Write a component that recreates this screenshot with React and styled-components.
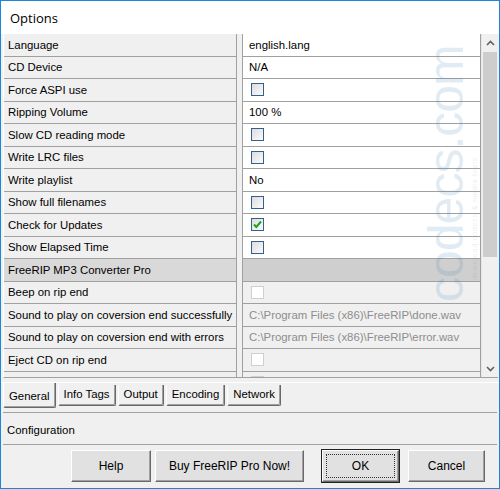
import React from "react";
import styled, { createGlobalStyle } from "styled-components";

const Global = createGlobalStyle`
  html, body { margin: 0; padding: 0; background: #fff; }
  body { font-family: "Liberation Sans", Arial, sans-serif; }
  * { box-sizing: border-box; }
`;

const Window = styled.div`
  width: 500px;
  height: 489px;
  border: 1px solid #1e86d6;
  background: #f0f0f0;
  display: flex;
  flex-direction: column;
  overflow: hidden;
  font-size: 11.4px;
  color: #000;
`;

const TitleBar = styled.div`
  height: 33px;
  flex-shrink: 0;
  background: #fff;
  padding-left: 9px;
  display: flex;
  align-items: center;
  font-size: 13px;
  font-family: "Open Sans", "Liberation Sans", sans-serif;
`;

const GridFrame = styled.div`
  margin: 0 1px 0 2px;
  height: 344px;
  flex-shrink: 0;
  display: flex;
  border-left: 1px solid #fff;
  border-bottom: 1px solid #a0a0a0;
`;

const Grid = styled.div`
  flex: 1;
  position: relative;
  overflow: hidden;
  background: #f0f0f0;
`;

const Row = styled.div`
  display: grid;
  grid-template-columns: 233px 6px 1fr;
  height: 22.5px;
`;

const NameCell = styled.div`
  background: ${(p) => (p.$category ? "#d9d9d9" : "#f0f0f0")};
  border-bottom: 1px solid #a0a0a0;
  border-right: 1px solid #a0a0a0;
  padding-left: 4px;
  display: flex;
  align-items: center;
  white-space: nowrap;
  overflow: hidden;
`;

const Splitter = styled.div`
  background: #f0f0f0;
  border-right: 1px solid #a0a0a0;
`;

const ValueCell = styled.div`
  background: ${(p) =>
    p.$category ? "#cfcfcf" : p.$disabled ? "#f0f0f0" : "#fff"};
  color: ${(p) => (p.$disabled ? "#8d8d8d" : "#000")};
  border-bottom: 1px solid #a0a0a0;
  border-right: 1px solid #a0a0a0;
  padding-left: 6px;
  display: flex;
  align-items: center;
  white-space: nowrap;
  overflow: hidden;
`;

const Check = styled.span`
  width: 13px;
  height: 13px;
  border: 1px solid ${(p) => (p.$disabled ? "#cfcfcf" : "#335f91")};
  background: ${(p) =>
    p.$disabled ? "#fff" : "linear-gradient(135deg, #dcdcdc, #fbfbfb)"};
  margin-left: 2px;
  display: flex;
  align-items: center;
  justify-content: center;
`;

const Watermark = styled.div`
  position: absolute;
  left: 417px;
  top: 0;
  width: 270px;
  height: 60px;
  transform-origin: 0 0;
  transform: translate(0, 268px) rotate(-90deg);
  pointer-events: none;
  display: flex;
  flex-direction: column;
  color: rgba(70, 130, 180, 0.16);
  font-family: "Liberation Sans", Arial, sans-serif;
  white-space: nowrap;
`;

const WmBig = styled.div`
  font-size: 50px;
  line-height: 50px;
  letter-spacing: -1px;
`;

const WmSmall = styled.div`
  font-size: 7.5px;
  line-height: 8px;
  padding-left: 22px;
  letter-spacing: 0.6px;
`;

const ScrollBar = styled.div`
  width: 17px;
  background: #f0f0f0;
  display: flex;
  flex-direction: column;
  border-left: 1px solid #e6e6e6;
`;

const Arrow = styled.div`
  height: 17px;
  display: flex;
  align-items: center;
  justify-content: center;
`;

const Track = styled.div`
  flex: 1;
  display: flex;
  flex-direction: column;
  padding: 1px 1px 0 1px;
`;

const Thumb = styled.div`
  height: 205px;
  background: #cdcdcd;
`;

const TabStrip = styled.div`
  margin-top: 4px;
  padding-left: 2px;
  border-top: 1px solid #fff;
  display: flex;
  align-items: flex-start;
  height: 30px;
  flex-shrink: 0;
`;

const Tab = styled.div`
  height: ${(p) => (p.$active ? "25px" : "21px")};
  margin-top: ${(p) => (p.$active ? "0" : "2px")};
  padding: ${(p) => (p.$active ? "7px 5px 0" : "3px 5px 0")};
  margin-right: 2px;
  background: #f0f0f0;
  border-left: 1px solid #fff;
  border-right: 1px solid #696969;
  border-bottom: 1px solid #696969;
  box-shadow: inset -1px -1px 0 #a0a0a0;
  border-radius: 0 0 2px 2px;
  white-space: nowrap;
`;

const StatusPanel = styled.div`
  margin: 0 2px;
  height: 33px;
  flex-shrink: 0;
  border-top: 1px solid #a0a0a0;
  border-bottom: 1px solid #a0a0a0;
  padding: 2px 0 0 4px;
  display: flex;
  align-items: center;
`;

const ButtonRow = styled.div`
  display: flex;
  justify-content: flex-end;
  gap: 4px;
  padding: 5px 14px 0 0;
`;

const Button = styled.div`
  width: ${(p) => p.$w}px;
  height: 32px;
  margin-left: ${(p) => p.$ml || 0}px;
  background: #e1e1e1;
  border-top: 1px solid #fff;
  border-left: 1px solid #fff;
  border-right: 1px solid #696969;
  border-bottom: 1px solid #696969;
  box-shadow: ${(p) =>
    p.$default ? "0 0 0 1px #222, inset -1px -1px 0 #a0a0a0" : "inset -1px -1px 0 #a0a0a0"};
  display: flex;
  align-items: center;
  justify-content: center;
  padding: 3px;
  font-size: 12px;
`;

const Focus = styled.div`
  width: 100%;
  height: 100%;
  border: 1px dotted #333;
  display: flex;
  align-items: center;
  justify-content: center;
`;

const Tick = () => (
  <svg width="11" height="11" viewBox="0 0 11 11">
    <path d="M2 5.5 L4.3 8 L9 2.5" fill="none" stroke="#21a121" strokeWidth="2" />
  </svg>
);

const rows = [
  { name: "Language", value: "english.lang" },
  { name: "CD Device", value: "N/A" },
  { name: "Force ASPI use", check: true },
  { name: "Ripping Volume", value: "100 %" },
  { name: "Slow CD reading mode", check: true },
  { name: "Write LRC files", check: true },
  { name: "Write playlist", value: "No" },
  { name: "Show full filenames", check: true },
  { name: "Check for Updates", check: true, checked: true },
  { name: "Show Elapsed Time", check: true },
  { name: "FreeRIP MP3 Converter Pro", category: true },
  { name: "Beep on rip end", check: true, disabled: true },
  { name: "Sound to play on coversion end successfully", value: "C:\\Program Files (x86)\\FreeRIP\\done.wav", disabled: true },
  { name: "Sound to play on coversion end with errors", value: "C:\\Program Files (x86)\\FreeRIP\\error.wav", disabled: true },
  { name: "Eject CD on rip end", check: true, disabled: true },
  { name: "", check: true, disabled: true },
];

export default function App() {
  return (
    <>
      <Global />
      <Window>
        <TitleBar>Options</TitleBar>
        <GridFrame>
          <Grid>
            {rows.map((r, i) => (
              <Row key={i}>
                <NameCell $category={r.category}>{r.name}</NameCell>
                <Splitter />
                <ValueCell $category={r.category} $disabled={r.disabled}>
                  {r.check ? (
                    <Check $disabled={r.disabled}>{r.checked && <Tick />}</Check>
                  ) : (
                    r.value
                  )}
                </ValueCell>
              </Row>
            ))}
            <Watermark>
              <WmBig>codecs.com</WmBig>
              <WmSmall>download codecs &amp; media tools</WmSmall>
            </Watermark>
          </Grid>
          <ScrollBar>
            <Arrow>
              <svg width="9" height="6" viewBox="0 0 9 6">
                <path d="M1 5 L4.5 1.5 L8 5" fill="none" stroke="#606060" strokeWidth="1.6" />
              </svg>
            </Arrow>
            <Track>
              <Thumb />
            </Track>
            <Arrow>
              <svg width="9" height="6" viewBox="0 0 9 6">
                <path d="M1 1 L4.5 4.5 L8 1" fill="none" stroke="#606060" strokeWidth="1.6" />
              </svg>
            </Arrow>
          </ScrollBar>
        </GridFrame>
        <TabStrip>
          <Tab $active>General</Tab>
          <Tab>Info Tags</Tab>
          <Tab>Output</Tab>
          <Tab>Encoding</Tab>
          <Tab>Network</Tab>
        </TabStrip>
        <StatusPanel>Configuration</StatusPanel>
        <ButtonRow>
          <Button $w={80}>Help</Button>
          <Button $w={149}>Buy FreeRIP Pro Now!</Button>
          <Button $w={77} $ml={14} $default>
            <Focus>OK</Focus>
          </Button>
          <Button $w={77} $ml={5}>Cancel</Button>
        </ButtonRow>
      </Window>
    </>
  );
}
